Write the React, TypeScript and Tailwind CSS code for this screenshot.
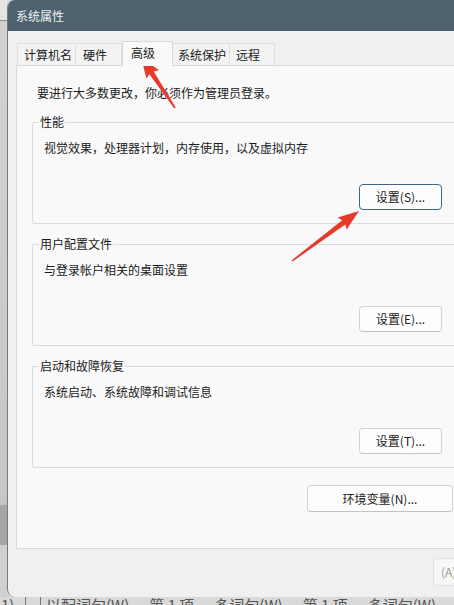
import React from "react";

const font = "font-['Segoe_UI','Noto_Sans_CJK_SC',sans-serif]";

const tabs = [
  { label: "计算机名", w: "w-[59px]", pl: "pl-[6px]" },
  { label: "硬件", w: "w-[47px]", pl: "pl-[7px]" },
  { label: "高级", w: "w-[51px]", pl: "pl-[8px]", active: true },
  { label: "系统保护", w: "w-[58px]", pl: "pl-[5px]" },
  { label: "远程", w: "w-[46px]", pl: "pl-[6px]" },
];

const groups = [
  { title: "性能", desc: "视觉效果，处理器计划，内存使用，以及虚拟内存", button: "设置(S)...", focused: true },
  { title: "用户配置文件", desc: "与登录帐户相关的桌面设置", button: "设置(E)..." },
  { title: "启动和故障恢复", desc: "系统启动、系统故障和调试信息", button: "设置(T)..." },
];

// tapered red annotation arrow, tail -> tip
function arrowPoints(tx: number, ty: number, hx: number, hy: number) {
  const dx = hx - tx;
  const dy = hy - ty;
  const len = Math.hypot(dx, dy);
  const ux = dx / len;
  const uy = dy / len;
  const nx = -uy;
  const ny = ux;
  const headLen = 19;
  const bx = hx - ux * headLen;
  const by = hy - uy * headLen;
  const p = (x: number, y: number) => `${x.toFixed(1)},${y.toFixed(1)}`;
  return [
    p(tx + nx * 0.8, ty + ny * 0.8),
    p(bx + nx * 2.6, by + ny * 2.6),
    p(bx - ux * 2 + nx * 7.5, by - uy * 2 + ny * 7.5),
    p(hx, hy),
    p(bx - ux * 2 - nx * 7.5, by - uy * 2 - ny * 7.5),
    p(bx - nx * 2.6, by - ny * 2.6),
    p(tx - nx * 0.8, ty - ny * 0.8),
  ].join(" ");
}

function SettingsGroup({ title, desc, button, focused }: (typeof groups)[number]) {
  return (
    <div className="relative h-[102px] border border-[#dcdcdc] rounded-[2px] flex flex-col pt-[17px] pl-[11px]">
      <span className="absolute -top-[9px] left-[6px] px-[1px] bg-[#f9f9f9] leading-[16px] text-[#1b1b1b]">
        {title}
      </span>
      <p className="leading-[16px] text-[#1b1b1b]">{desc}</p>
      <button
        className={`mt-auto mb-[13px] self-end mr-[15px] w-[83px] h-[26px] rounded-[4px] bg-[#fdfdfd] text-[#1b1b1b] ${
          focused ? "border border-[#3d6585] shadow-[inset_0_0_0_1px_#ffffff]" : "border border-[#d3d3d3] border-b-[#c2c2c2]"
        }`}
      >
        {button}
      </button>
    </div>
  );
}

export default function App() {
  return (
    <div className={`relative w-[454px] h-[605px] overflow-hidden bg-[#d9d9d9] text-[12px] ${font}`}>
      <div className="flex h-[597px]">
        {/* window behind, left edge */}
        <div className="w-[7px] shrink-0 flex flex-col">
          <div className="h-[20px] bg-[#e4e4e4]" />
          <div className="h-px bg-[#8c8c8c]" />
          <div className="flex-1 bg-gradient-to-b from-[#d2d2d2] to-[#c6c6c6]" />
          <div className="h-[40px] bg-[#a6a6a6]" />
          <div className="h-[52px] bg-[#d0d0d0]" />
        </div>

        {/* dialog */}
        <div className="w-[475px] shrink-0 flex flex-col rounded-l-[8px] overflow-hidden border-l border-[#6f7c86] bg-[#f0f0f0]">
          <div className="h-[31px] shrink-0 bg-[#4d616e] flex items-center pl-[8px] text-[#eef1f3] leading-[16px]">
            系统属性
          </div>

          <div className="flex-1 flex flex-col pt-[9px] pl-[8px]">
            <div className="flex items-end h-[25px] pl-px">
              {tabs.map((t) =>
                t.active ? (
                  <div
                    key={t.label}
                    className={`${t.w} ${t.pl} h-[25px] -mb-px relative z-10 bg-[#f9f9f9] border border-b-0 border-[#d9d9d9] pt-[3px] leading-[16px] text-[#1b1b1b]`}
                  >
                    {t.label}
                  </div>
                ) : (
                  <div
                    key={t.label}
                    className={`${t.w} ${t.pl} h-[22px] bg-[#f3f3f3] border border-b-0 border-[#dfdfdf] -ml-px first:ml-0 pt-[3px] leading-[16px] text-[#1b1b1b]`}
                  >
                    {t.label}
                  </div>
                )
              )}
            </div>

            <div className="h-[484px] w-[466px] bg-[#f9f9f9] border border-[#d9d9d9] flex flex-col pt-[19px] pl-[15px]">
              <p className="pl-[5px] leading-[16px] text-[#1b1b1b]">要进行大多数更改，你必须作为管理员登录。</p>
              <div className="mt-[21px] w-[426px] flex flex-col gap-[20px]">
                {groups.map((g) => (
                  <SettingsGroup key={g.title} {...g} />
                ))}
              </div>
              <button className="mt-[17px] ml-[275px] w-[146px] h-[27px] rounded-[4px] bg-[#fdfdfd] border border-[#d3d3d3] border-b-[#c2c2c2] text-[#1b1b1b]">
                环境变量(N)...
              </button>
            </div>

            <div className="flex mt-[9px] pl-[417px]">
              <button className="w-[75px] h-[28px] rounded-[4px] bg-[#f7f7f7] border border-[#e2e2e2] text-left pl-[7px] text-[#9a9a9a]">
                (A)
              </button>
            </div>
          </div>
        </div>
      </div>

      {/* status bar of the window behind, mostly hidden */}
      <div className="h-[8px] overflow-hidden flex items-start text-[15px] leading-[22px] text-[#555]">
        <span className="w-[25px] shrink-0 pl-[1px] -mt-[3px]">1)</span>
        <span className="w-px h-full bg-[#777] shrink-0" />
        <span className="w-[14px] shrink-0" />
        <span className="w-px h-full bg-[#777] shrink-0" />
        <span className="flex gap-[20px] pl-[5px] -mt-[3px] whitespace-nowrap">
          <span>以配词句(W)</span>
          <span>第 1 项</span>
          <span>多词句(W)</span>
          <span>第 1 项</span>
          <span>多词句(W)</span>
          <span>第 1 项</span>
          <span>多</span>
        </span>
      </div>

      {/* red annotation arrows */}
      <svg className="absolute inset-0 pointer-events-none" width="454" height="605" viewBox="0 0 454 605">
        <polygon points={arrowPoints(175, 108, 141, 57)} fill="#e8392b" />
        <polygon points={arrowPoints(292, 261, 359, 211)} fill="#e8392b" />
      </svg>
    </div>
  );
}
